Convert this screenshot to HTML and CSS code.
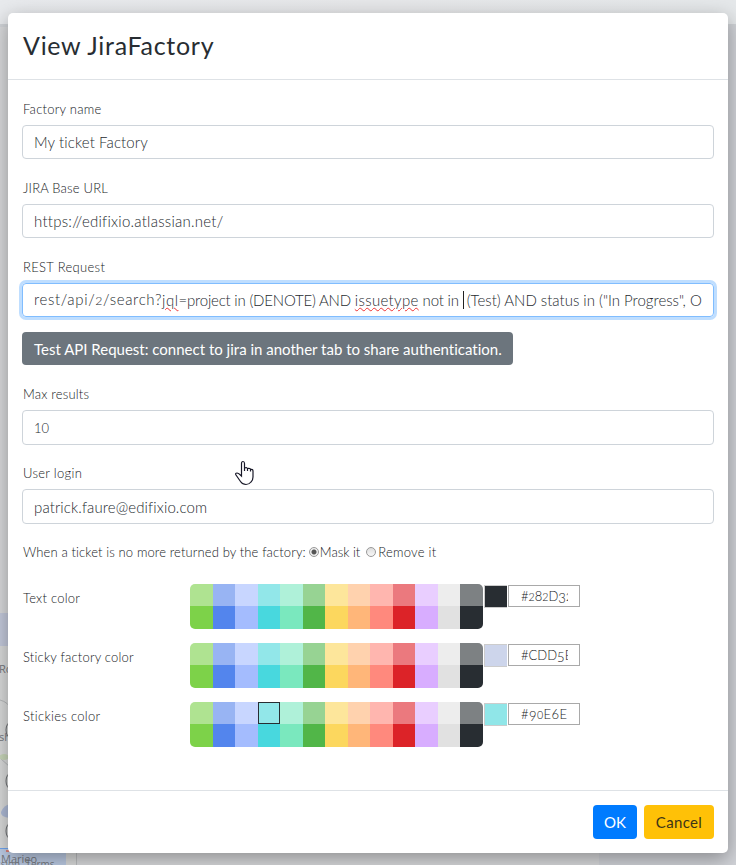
FILE: index.html
```html
<!DOCTYPE html>
<html lang="en">
<head>
<meta charset="utf-8">
<title>View JiraFactory</title>
<link rel="stylesheet" href="styles.css">
</head>
<body>
<div class="backdrop" aria-hidden="true">
  <svg width="736" height="865" viewBox="0 0 736 865">
    <defs>
      <linearGradient id="bar" x2="1" y2="0"><stop offset="0" stop-color="#e8eaed"/><stop offset=".5" stop-color="#e6e7e9"/><stop offset="1" stop-color="#e5e8ea"/></linearGradient>
    </defs>
    <rect width="736" height="865" fill="#d9dadc"/>
    <rect width="736" height="24" fill="url(#bar)"/>
    <rect y="24" width="736" height="3" fill="#d0d3d7"/>
    <rect x="599" y="27" width="137" height="838" fill="#d1d3d8"/>
    <rect y="613" width="77" height="33" fill="#c4cadc"/>
    <rect y="646" width="77" height="219" fill="#dadbdb"/>
    <path d="M0 700q8 2 12 10M0 758l10 9" fill="none" stroke="#b5b8ba"/>
    <path d="M1 812q3-7 9-8v14q-10-1-9-6" fill="#aebbd7"/>
    <ellipse cx="4" cy="757" rx="5" ry="3" fill="#c9d7ba"/>
    <rect y="849" width="66" height="16" fill="#bccbe4"/>
    <path d="M0 848.500h10" stroke="#6fa5ef"/>
    <path d="M6 851h3" stroke="#d98078" stroke-width="2"/>
    <path d="M76.500 849v16" stroke="#bcbec0"/>
    <g fill="none" stroke="#686b6f"><ellipse cx="11" cy="730" rx="5" ry="8"/><ellipse cx="11" cy="781" rx="5" ry="8"/><ellipse cx="11" cy="831" rx="5" ry="8"/></g>
    <g class="map-text"><text x="-1" y="673">Ro</text><text x="-1" y="741">sh</text><text x="1" y="863">Marieo</text><text class="terms" x="-4" y="868">ssion, Terms</text></g>
  </svg>
</div>
<main class="modal">
  <header class="head"><h1>View JiraFactory</h1></header>
  <section class="body">
    <div class="field"><label class="t l1">Factory name</label><div class="input"><span class="t i1">My ticket Factory</span></div></div>
    <div class="field"><label class="t l2">JIRA Base URL</label><div class="input"><span class="t i2">https://edifixio.atlassian.net/</span></div></div>
    <div class="field"><label class="t l3">REST Request</label><div class="input focus"><span class="t r1">rest/api/<span class="osf">2</span>/search?</span><span class="t r2 typo">jql</span><span class="t r3">=project in (DENOTE) AND </span><span class="t r4 typo">issuetype</span><span class="t r5"> not in </span><i class="caret"></i><span class="t">(Test) AND status in ("In Progress", O</span></div></div>
    <button class="btn test"><span class="t">Test API Request: connect to jira in another tab to share authentication.</span></button>
    <div class="field"><label class="t l4">Max results</label><div class="input tall"><span class="t i4">10</span></div></div>
    <div class="field"><label class="t l5">User login</label><div class="input tall"><span class="t i5">patrick.faure@edifixio.com</span></div></div>
    <div class="choice"><span class="t c1">When a ticket is no more returned by the factory:</span><i class="radio on"></i><span class="t c2">Mask it</span><i class="radio second"></i><span class="t c3">Remove it</span></div>
    <div class="color-row"><div class="name t n1">Text color</div><div class="palette"></div><i class="swatch dark"></i><div class="hex"><span class="clip">#<span class="osf">2</span>8<span class="osf">2</span>D<span class="low">3</span><span class="osf">2</span></span></div></div>
    <div class="color-row"><div class="name t n2">Sticky factory color</div><div class="palette"></div><i class="swatch lilac"></i><div class="hex"><span class="clip">#CDD<span class="low">5</span>E</span></div></div>
    <div class="color-row"><div class="name t n3">Stickies color</div><div class="palette selected"></div><i class="swatch aqua"></i><div class="hex"><span class="clip wide">#<span class="low">9</span><span class="osf">0</span>E6E</span></div></div>
  </section>
  <footer class="foot"><button class="btn ok">OK</button><button class="btn cancel">Cancel</button></footer>
</main>
<svg class="pointer" width="20" height="26" viewBox="0 0 20 26"><path d="M6.500 15V3.500q0-2 1.500-2t1.500 2V11V8q3-1 3 1v2V8.500q3-.5 3 1v2V9.500q2.500-.5 2.500 1.500v6q0 3-2 5-2 2.500-5 2.500-3.500 0-5.500-3L1 15q-1-2 1-2 1.500 0 4.500 3Z" fill="#fff" stroke="#181828" stroke-width="1.200"/></svg>
<script src="palette.js"></script>
</body>
</html>
```
FILE: palette.js
```js
const shades = [
  '#afe391','#98b4f3','#c8d6ff','#92e7e9','#aff1d9','#97d393','#fde69b','#ffd2ae','#ffb6af','#eb797e','#e9ceff','#ededed','#7d8183',
  '#7dd249','#5385ed','#a4bcfe','#48d8de','#7ae8be','#51b648','#fcd75e','#ffb679','#ff897d','#dc2328','#d8adff','#e1e1e1','#282d32'
];
document.querySelectorAll('.palette').forEach(p => {
  shades.forEach(c => {
    const cell = document.createElement('i');
    cell.style.backgroundColor = c;
    p.append(cell);
  });
});
```
FILE: styles.css
```css
* { box-sizing: border-box; }
body { margin: 0; width: 736px; height: 865px; overflow: hidden; position: relative; padding: 13px 8px 12px; color: #16191c; font-family: Lato, "Open Sans", sans-serif; font-size: 13px; font-weight: 300; }
.backdrop { position: absolute; inset: 0; }
.backdrop svg { display: block; }
.map-text { font: 11px "Open Sans", sans-serif; fill: #777a80; }
.terms { font-size: 10px; }
.modal { position: relative; width: 720px; height: 840px; background: #fff; border-radius: 5px; box-shadow: 0 6px 20px rgba(0,0,0,.35); display: flex; flex-direction: column; }
.head { height: 67px; border-bottom: 1px solid #dee2e6; padding: 0 15px; flex: none; }
h1 { margin: 0; font-size: 25px; line-height: 65px; font-weight: 400; letter-spacing: .7px; color: #282d32; }
.body { padding: 15px 14px 0; flex: 1; }
.t { white-space: pre; font-variant-ligatures: none; }
.l1, .n1, .i2 { letter-spacing: .25px; }
.l2, .l4, .n2 { letter-spacing: .2px; }
.l3, .l5, .n3 { letter-spacing: .32px; }
.i1, .i5, .c1 { letter-spacing: .12px; }
.r1 { letter-spacing: .64px; }
.r2 { letter-spacing: .5px; }
.r3 { letter-spacing: -.2px; }
.r4 { letter-spacing: .33px; }
.r5 { letter-spacing: -.17px; }
.c3 { letter-spacing: .25px; }
.field { height: 79px; }
label { display: block; height: 30px; line-height: 28px; padding-left: 1px; }
.input { height: 34px; border: 1px solid #ced4da; border-radius: 4px; padding: 0 11px; display: flex; align-items: center; font-size: 15px; color: #262b30; line-height: 20px; white-space: pre; }
.tall { height: 35px; }
.focus { border-color: #80bdff; box-shadow: 0 0 0 3px #bfdeff; }
.osf { font-size: .82em; }
.low { position: relative; top: 2px; }
.i4 { font-size: 13px; }
.typo { text-decoration: underline wavy #e33; text-decoration-thickness: 1px; text-underline-offset: 1px; }
.caret { width: 1px; height: 18px; background: #222; margin-right: 3px; }
.btn { font: inherit; font-size: 15px; border: 0; border-radius: 4px; padding: 0; height: 34px; white-space: nowrap; }
.test { display: block; width: 491px; height: 33px; margin-bottom: 15px; background: #6c757d; color: #fff; padding: 0 12px; text-align: left; font-weight: 400; }
.choice { display: flex; align-items: center; height: 46px; padding: 0 0 18px 1px; }
.radio { width: 10px; height: 10px; margin: 0 1px 1px 3px; border: 1px solid #999; border-radius: 50%; background: linear-gradient(#ddd,#f8f8f8); }
.on { background: radial-gradient(circle, #555 0 2px, #eee 3px); }
.second { margin-left: 6px; margin-right: 2px; }
.color-row { display: flex; height: 59px; }
.name { width: 168px; padding-left: 1px; line-height: 29px; }
.palette { width: 293px; height: 45px; display: grid; grid-template-columns: repeat(13, 1fr); grid-template-rows: 22px 23px; border-radius: 5px; overflow: hidden; }
.selected i:nth-child(4) { border: 1px solid #282d32; }
.swatch { width: 23px; height: 23px; border: 1px solid #ccc; border-right: 0; margin: 1px 1px 0 1px; }
.dark { background: #282d32; }
.lilac { background: #cdd5eb; }
.aqua { background: #90e6e8; }
.hex { width: 72px; height: 22px; margin-top: 1px; border: 1px solid #a9a9a9; padding: 0 12px; line-height: 21px; }
.clip { display: block; width: 47px; overflow: hidden; white-space: nowrap; }
.wide { letter-spacing: .4px; }
.foot { height: 63px; border-top: 1px solid #dee2e6; display: flex; justify-content: flex-end; gap: 7px; padding: 14px; }
.ok { width: 44px; background: #007bff; color: #fff; font-weight: 400; }
.cancel { width: 70px; background: #ffc107; color: #3d3517; font-weight: 400; letter-spacing: .35px; }
.pointer { position: absolute; left: 235px; top: 460px; }
```
